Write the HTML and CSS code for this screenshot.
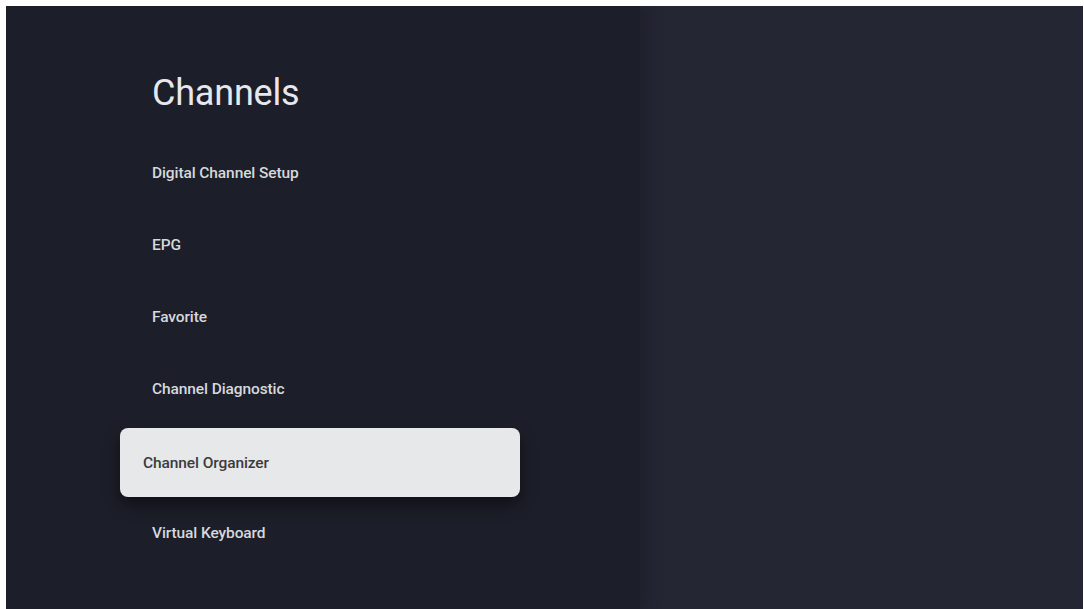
FILE: index.html
```html
<!DOCTYPE html>
<html>
<head>
<meta charset="utf-8">
<link rel="stylesheet" href="styles.css">
</head>
<body>
<div class="screen">
  <section class="left">
    <h1 class="title">Channels</h1>
    <ul class="menu">
      <li class="item">Digital Channel Setup</li>
      <li class="item">EPG</li>
      <li class="item">Favorite</li>
      <li class="item">Channel Diagnostic</li>
      <li class="item selected">Channel Organizer</li>
      <li class="item">Virtual Keyboard</li>
    </ul>
  </section>
  <section class="right"></section>
</div>
</body>
</html>
```
FILE: styles.css
```css
html, body {
  margin: 0;
  padding: 0;
  background: #ffffff;
}
body {
  width: 1084px;
  height: 609px;
  overflow: hidden;
  font-family: Roboto, "Noto Sans", sans-serif;
}
.screen {
  display: flex;
  margin: 6px 1px 0 6px;
  height: 603px;
  background: #232532;
  overflow: hidden;
}
.left {
  width: 634px;
  background: #1c1e29;
  box-shadow: 6px 0 14px rgba(20, 22, 30, 0.35);
  padding-left: 114px;
  box-sizing: border-box;
  position: relative;
  z-index: 1;
}
.right {
  flex: 1;
  background: #242633;
}
.title {
  margin: 0;
  padding: 65px 0 0 32px;
  font-size: 36px;
  line-height: 44px;
  font-weight: 400;
  color: #e6e8ec;
  letter-spacing: -0.2px;
}
.menu {
  list-style: none;
  margin: 22px 0 0 0;
  padding: 0;
  width: 400px;
}
.item {
  height: 72px;
  display: flex;
  align-items: center;
  padding-left: 32px;
  font-size: 15.5px;
  font-weight: 500;
  color: #d6d8dd;
  letter-spacing: -0.1px;
}
.item.selected {
  height: 69px;
  margin: 3px 0 0 0;
  padding-left: 23px;
  background: #e7e8ea;
  color: #3a3b3f;
  border-radius: 8px;
  box-shadow: 0 8px 16px rgba(0, 0, 0, 0.45);
}
```
